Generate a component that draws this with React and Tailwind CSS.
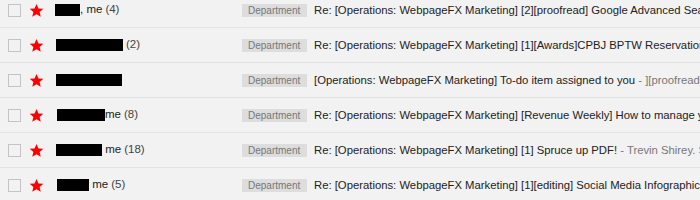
const rows = [
  { box: 25, pad: 0, after: ', me', count: '(4)', subject: 'Re: [Operations: WebpageFX Marketing] [2][proofread] Google Advanced Search Operators', snippet: '' },
  { box: 67, pad: 1, after: '', count: '(2)', subject: 'Re: [Operations: WebpageFX Marketing] [1][Awards]CPBJ BPTW Reservations', snippet: '' },
  { box: 66, pad: 1, after: '', count: '', subject: '[Operations: WebpageFX Marketing] To-do item assigned to you', snippet: ' - ][proofread] Google' },
  { box: 48, pad: 2, after: 'me', count: '(8)', subject: 'Re: [Operations: WebpageFX Marketing] [Revenue Weekly] How to manage your', snippet: '' },
  { box: 46, pad: 1, after: ' me', count: '(18)', subject: 'Re: [Operations: WebpageFX Marketing] [1] Spruce up PDF!', snippet: ' - Trevin Shirey. Spruce' },
  { box: 32, pad: 2, after: ' me', count: '(5)', subject: 'Re: [Operations: WebpageFX Marketing] [1][editing] Social Media Infographic Draft', snippet: '' },
];

function Star() {
  return (
    <svg width="15" height="15" viewBox="0 0 24 24" className="shrink-0">
      <path d="M12 1.5l3.1 7.2 7.8.6-5.9 5.1 1.8 7.6L12 18l-6.8 4 1.8-7.6-5.9-5.1 7.8-.6z" fill="#ff0000" />
    </svg>
  );
}

export default function App() {
  return (
    <div className="w-[700px] h-[200px] overflow-hidden bg-[#f2f2f2] font-['Liberation_Sans',Arial,sans-serif] text-[11px] text-[#222]">
      <div className="-mt-[7px]">
        {rows.map((r, i) => (
          <div key={i} className="flex items-center h-[35px] border-b border-[#e3e3e3] pl-[8px] whitespace-pre">
            <div className="w-[13px] h-[13px] border border-[#c4c4c4] shrink-0" />
            <div className="ml-[8px] shrink-0 flex"><Star /></div>
            <div className="ml-[11px] w-[187px] shrink-0 flex items-center" style={{ paddingLeft: r.pad }}>
              <span className="inline-block h-[12px] bg-black" style={{ width: r.box }} />
              {r.after && <span className="text-[11.5px]">{r.after}</span>}
              {r.count && <span className="ml-[3px] text-[11.5px] text-[#444]">{r.count}</span>}
            </div>
            <div className="w-[65px] h-[13px] shrink-0 bg-[#dddddd] text-[#777] text-[10px] leading-[13px] pl-[6px]">Department</div>
            <div className="ml-[7px] overflow-hidden text-[11.3px]">
              <span>{r.subject}</span>
              {r.snippet && <span className="text-[#777]">{r.snippet}</span>}
            </div>
          </div>
        ))}
      </div>
    </div>
  );
}
